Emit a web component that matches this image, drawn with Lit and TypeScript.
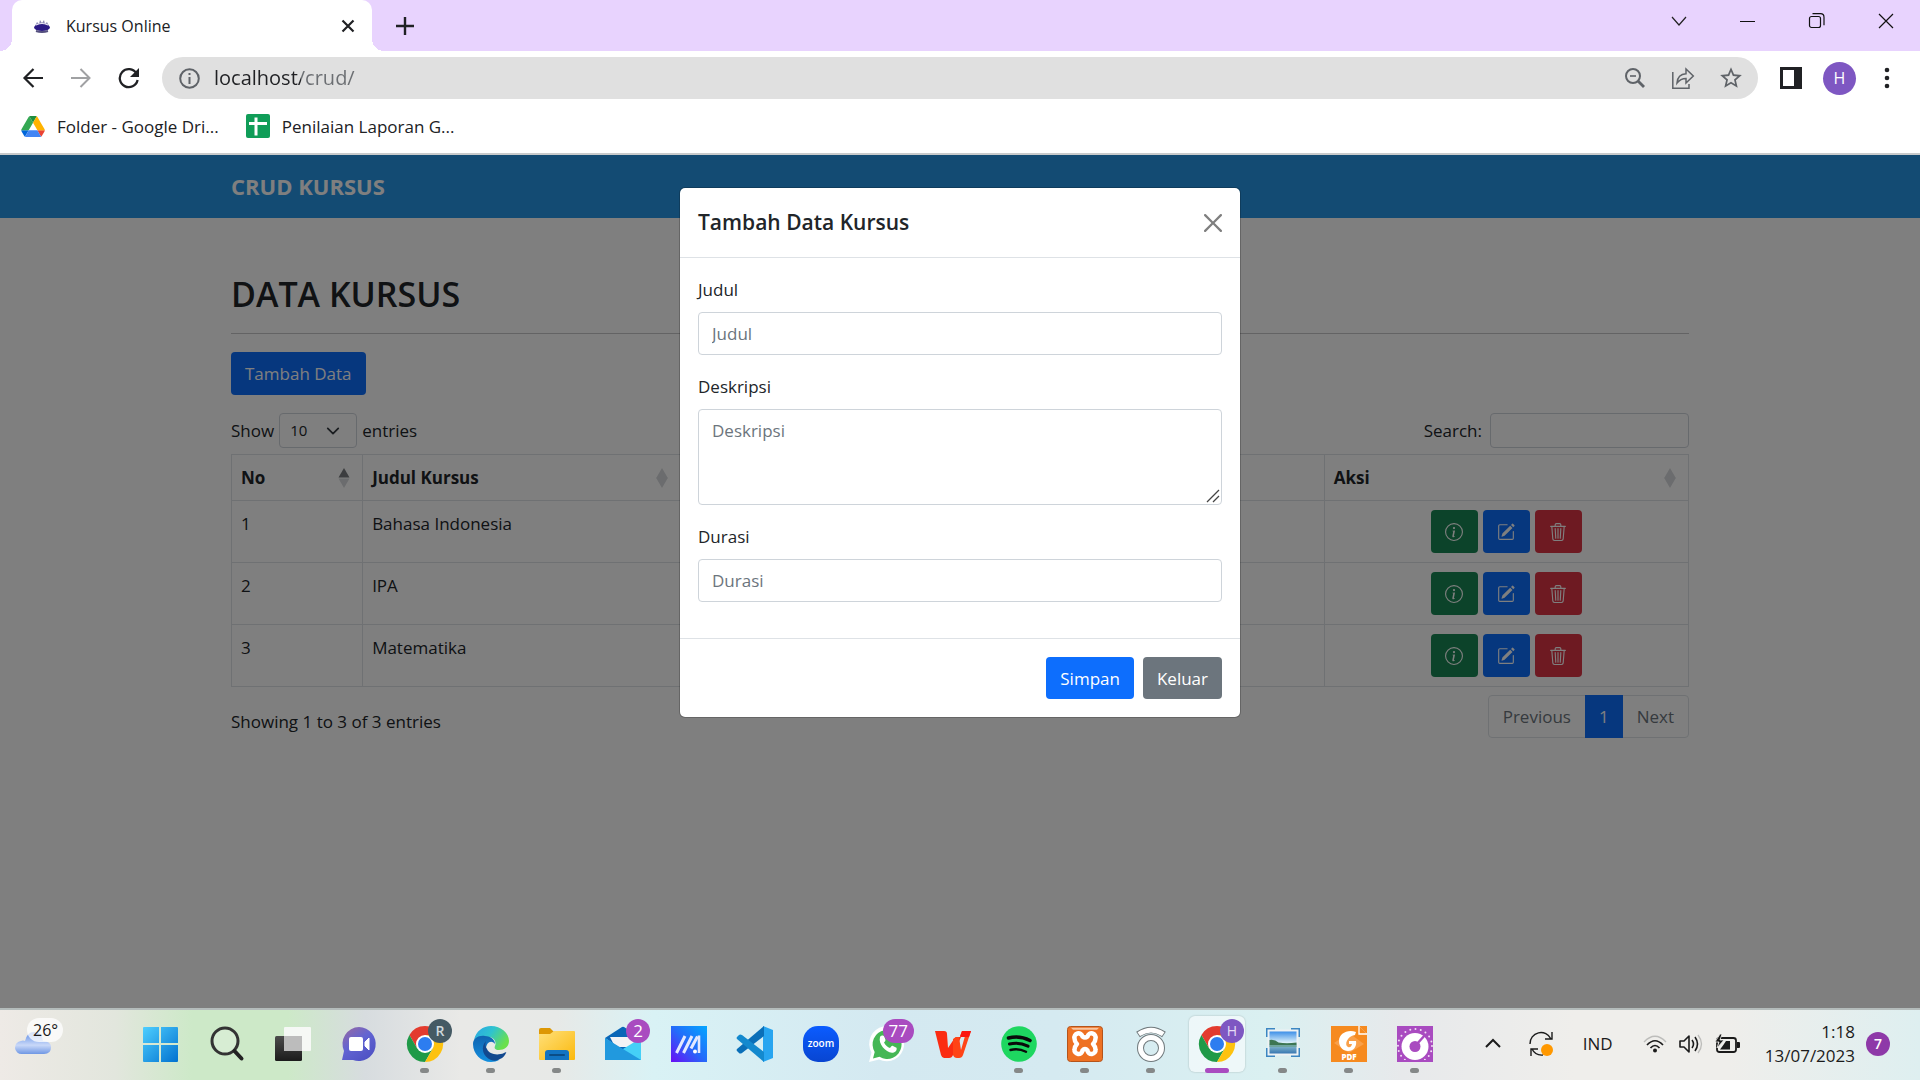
import { LitElement, html, css, svg } from "lit";
import { customElement, property } from "lit/decorators.js";

const icons = {
  info: svg`<path d="M8 15A7 7 0 1 1 8 1a7 7 0 0 1 0 14zm0 1A8 8 0 1 0 8 0a8 8 0 0 0 0 16z"/><path d="m8.93 6.588-2.29.287-.082.38.45.083c.294.07.352.176.288.469l-.738 3.468c-.194.897.105 1.319.808 1.319.545 0 1.178-.252 1.465-.598l.088-.416c-.2.176-.492.246-.686.246-.275 0-.375-.193-.304-.533L8.93 6.588zM9 4.5a1 1 0 1 1-2 0 1 1 0 0 1 2 0z"/>`,
  edit: svg`<path d="M15.502 1.94a.5.5 0 0 1 0 .706L14.459 3.69l-2-2L13.502.646a.5.5 0 0 1 .707 0l1.293 1.293zm-1.75 2.456-2-2L4.939 9.21a.5.5 0 0 0-.121.196l-.805 2.414a.25.25 0 0 0 .316.316l2.414-.805a.5.5 0 0 0 .196-.12l6.813-6.814z"/><path d="M1 13.5A1.5 1.5 0 0 0 2.5 15h11a1.5 1.5 0 0 0 1.5-1.5v-6a.5.5 0 0 0-1 0v6a.5.5 0 0 1-.5.5h-11a.5.5 0 0 1-.5-.5v-11a.5.5 0 0 1 .5-.5H9a.5.5 0 0 0 0-1H2.5A1.5 1.5 0 0 0 1 2.5v11z"/>`,
  trash: svg`<path d="M6.5 1h3a.5.5 0 0 1 .5.5v1H6v-1a.5.5 0 0 1 .5-.5ZM11 2.5v-1A1.5 1.5 0 0 0 9.5 0h-3A1.5 1.5 0 0 0 5 1.5v1H2.506a.58.58 0 0 0-.01 0H1.5a.5.5 0 0 0 0 1h.538l.853 10.66A2 2 0 0 0 4.885 16h6.23a2 2 0 0 0 1.994-1.84l.853-10.66h.538a.5.5 0 0 0 0-1h-.995a.59.59 0 0 0-.01 0H11Zm1.958 1-.846 10.58a1 1 0 0 1-.997.92h-6.23a1 1 0 0 1-.997-.92L3.042 3.5h9.916Zm-7.487 1a.5.5 0 0 1 .528.47l.5 8.5a.5.5 0 0 1-.998.06L5 5.03a.5.5 0 0 1 .47-.53Zm5.058 0a.5.5 0 0 1 .47.53l-.5 8.5a.5.5 0 1 1-.998-.06l.5-8.5a.5.5 0 0 1 .528-.47ZM8 4.5a.5.5 0 0 1 .5.5v8.5a.5.5 0 0 1-1 0V5a.5.5 0 0 1 .5-.5Z"/>`,
  close: svg`<path d="M.293.293a1 1 0 0 1 1.414 0L8 6.586 14.293.293a1 1 0 1 1 1.414 1.414L9.414 8l6.293 6.293a1 1 0 0 1-1.414 1.414L8 9.414l-6.293 6.293a1 1 0 0 1-1.414-1.414L6.586 8 .293 1.707a1 1 0 0 1 0-1.414z"/>`,
};

const bootIcon = (shape: unknown) =>
  html`<svg width="18" height="18" viewBox="0 0 16 16" fill="currentColor" aria-hidden="true">${shape}</svg>`;

const base = css`
  *,
  *::before,
  *::after {
    box-sizing: border-box;
  }
  button,
  input,
  select,
  textarea {
    font: inherit;
    color: inherit;
    margin: 0;
  }
  button {
    border: 0;
    padding: 0;
    background: none;
    cursor: pointer;
  }
  a {
    color: inherit;
    text-decoration: none;
  }
  svg {
    display: block;
    flex: none;
  }
`;

@customElement("browser-chrome")
class BrowserChrome extends LitElement {
  static styles = [
    base,
    css`
      :host {
        display: block;
        background: #fff;
        color: #202124;
        font-size: 17px;
        border-bottom: 2px solid #c8cacb;
      }
      .strip {
        display: flex;
        height: 51px;
        padding-left: 12px;
        background: #e8d3fe;
      }
      .tab {
        position: relative;
        display: flex;
        align-items: center;
        width: 360px;
        padding: 0 16px 0 21px;
        background: #fff;
        border-radius: 10px 10px 0 0;
      }
      .tab::before,
      .tab::after {
        content: "";
        position: absolute;
        bottom: 0;
        width: 12px;
        height: 12px;
      }
      .tab::before {
        left: -12px;
        background: radial-gradient(circle at 0 0, transparent 12px, #fff 12px);
      }
      .tab::after {
        right: -12px;
        background: radial-gradient(circle at 100% 0, transparent 12px, #fff 12px);
      }
      .tab-title {
        flex: 1;
        padding-left: 15px;
        font-size: 16px;
      }
      .new-tab {
        width: 66px;
      }
      .new-tab svg,
      .window-controls svg,
      .tool svg {
        margin: auto;
      }
      .window-controls {
        display: flex;
        height: 42px;
        margin-left: auto;
      }
      .window-controls button {
        width: 69px;
      }
      .toolbar {
        display: flex;
        align-items: center;
        height: 54px;
        padding: 0 9px;
      }
      .tool {
        width: 48px;
        height: 42px;
      }
      .reload {
        margin-right: 9px;
        width: 48px;
      }
      .omnibox {
        display: flex;
        align-items: center;
        flex: 1;
        height: 42px;
        padding: 0 3px 0 17px;
        margin-right: 9px;
        border-radius: 21px;
        background: #e0e0e0;
      }
      .address {
        flex: 1;
        min-width: 0;
        border: 0;
        outline: 0;
        margin-left: 14px;
        padding: 0;
        font-size: 20px;
        line-height: 28px;
        color: transparent;
        background: linear-gradient(to right, #202124 87px, #6b6e72 87px) text;
      }
      .avatar {
        display: grid;
        place-items: center;
        width: 33px;
        height: 33px;
        margin: 0 7px 0 8px;
        border-radius: 50%;
        background: #7e57c2;
        color: #fff;
        font-size: 16px;
      }
      .bookmarks {
        display: flex;
        align-items: center;
        gap: 27px;
        height: 48px;
        padding: 0 21px 6px;
      }
      .bookmark {
        display: flex;
        align-items: center;
        gap: 12px;
      }
    `,
  ];

  render() {
    return html`
      <div class="strip">
        <div class="tab">
          <svg width="18" height="14" viewBox="0 0 18 14">
            <path d="M2 7 4 3l2 2 1-4 2 3 2-3 1 4 2-2 2 4z" fill="#8d8ab5" />
            <ellipse cx="9" cy="8.500" rx="8" ry="3.500" fill="#2b1a85" />
            <path d="M3 6q6-3 12 0" stroke="#eceaf8" fill="none" stroke-width="1.200" />
            <path d="M3 12q6 2 12 0" stroke="#55507f" fill="none" stroke-width="2" />
          </svg>
          <span class="tab-title">Kursus Online</span>
          <button aria-label="Tutup tab">
            <svg width="16" height="16" viewBox="0 0 16 16"><path d="M2.500 2.500l11 11M13.500 2.500l-11 11" stroke="#202124" stroke-width="2.200" /></svg>
          </button>
        </div>
        <button class="new-tab" aria-label="Tab baru">
          <svg width="20" height="20" viewBox="0 0 20 20"><path d="M10 1v18M1 10h18" stroke="#202124" stroke-width="2.400" /></svg>
        </button>
        <div class="window-controls">
          <button aria-label="Telusuri tab"><svg width="18" height="18" viewBox="0 0 18 18"><path d="M2 5l7 8 7-8" fill="none" stroke="#222" stroke-width="1.200" /></svg></button>
          <button aria-label="Perkecil"><svg width="18" height="18" viewBox="0 0 18 18"><path d="M1 9.500h15" stroke="#111" /></svg></button>
          <button aria-label="Pulihkan">
            <svg width="18" height="18" viewBox="0 0 18 18" fill="none" stroke="#111" stroke-width="1.200"><rect x="1.500" y="4.500" width="11" height="11" rx="2" /><path d="M4.500 1.700h8q3.500 0 3.500 3.500v8" /></svg>
          </button>
          <button aria-label="Tutup"><svg width="18" height="18" viewBox="0 0 18 18"><path d="M2 2l14 14M16 2L2 16" stroke="#111" stroke-width="1.200" /></svg></button>
        </div>
      </div>
      <div class="toolbar">
        <button class="tool" aria-label="Kembali">
          <svg width="22" height="22" viewBox="0 0 22 22" fill="none" stroke="#202124" stroke-width="2.200"><path d="M21 11H3M11.500 2L2.500 11l9 9" /></svg>
        </button>
        <button class="tool" aria-label="Maju">
          <svg width="22" height="22" viewBox="0 0 22 22" fill="none" stroke="#a0a1a3" stroke-width="2"><path d="M1 11h18M10.500 2l9 9-9 9" /></svg>
        </button>
        <button class="tool reload" aria-label="Muat ulang">
          <svg width="22" height="22" viewBox="0 0 22 22"><path d="M18.500 6.500A9 9 0 1 0 19.600 13" fill="none" stroke="#202124" stroke-width="2.300" /><path d="M21 1v9h-9z" fill="#202124" /></svg>
        </button>
        <div class="omnibox">
          <svg width="21" height="21" viewBox="0 0 21 21" fill="none" stroke="#5f6368" stroke-width="2"><circle cx="10.500" cy="10.500" r="9.300" /><path d="M10.500 9v7M10.500 5v2" /></svg>
          <input class="address" type="text" aria-label="Alamat" value="localhost/crud/" />
          <button class="tool" aria-label="Zoom">
            <svg width="22" height="22" viewBox="0 0 22 22" fill="none" stroke="#5f6368" stroke-width="2"><circle cx="9" cy="9" r="7" /><path d="M14 14l6 6" stroke-width="2.800" /><path d="M6 9h6" stroke-width="1.600" /></svg>
          </button>
          <button class="tool" aria-label="Bagikan">
            <svg width="24" height="24" viewBox="0 0 24 24" fill="none" stroke="#5f6368" stroke-width="1.500"><path d="M1.800 6v16.200H18V18" /><path d="M6 17c.5-6 4-9 9-9.200V3l7.300 7-7.300 7v-4.600c-4 0-6.500 1.400-9 4.600z" /></svg>
          </button>
          <button class="tool" aria-label="Tandai halaman">
            <svg width="26" height="26" viewBox="0 0 24 24"><path d="M22 9.240l-7.190-.62L12 2 9.190 8.630 2 9.240l5.460 4.730L5.820 21 12 17.270 18.180 21l-1.630-7.030L22 9.240zM12 15.400l-3.760 2.270 1-4.280-3.320-2.880 4.380-.38L12 6.100l1.710 4.040 4.380.38-3.320 2.880 1 4.280L12 15.400z" fill="#5f6368" /></svg>
          </button>
        </div>
        <button class="tool" aria-label="Panel samping">
          <svg width="22" height="22" viewBox="0 0 22 22"><rect width="22" height="22" fill="#202124" /><rect x="3" y="3" width="11" height="16" fill="#fff" /></svg>
        </button>
        <button class="avatar" aria-label="Profil">H</button>
        <button class="tool" aria-label="Menu">
          <svg width="6" height="22" viewBox="0 0 6 22" fill="#202124"><circle cx="3" cy="3" r="2.300" /><circle cx="3" cy="11" r="2.300" /><circle cx="3" cy="19" r="2.300" /></svg>
        </button>
      </div>
      <nav class="bookmarks" aria-label="Bookmark">
        <a class="bookmark" href="#drive">
          <svg width="24" height="21" viewBox="0 0 87 78">
            <path d="m6.600 66.850 3.850 6.650c.8 1.400 1.950 2.500 3.300 3.300l13.750-23.800h-27.500c0 1.550.4 3.100 1.200 4.500z" fill="#0066da" />
            <path d="m43.650 25-13.750-23.800c-1.350.8-2.500 1.900-3.300 3.300l-25.400 44a9.060 9.060 0 0 0 -1.200 4.500h27.500z" fill="#34a853" />
            <path d="m73.550 76.800c1.350-.8 2.500-1.900 3.300-3.300l1.600-2.750 7.650-13.250c.8-1.400 1.200-2.950 1.200-4.500h-27.502l5.852 11.500z" fill="#ea4335" />
            <path d="m43.650 25 13.750-23.800c-1.350-.8-2.900-1.200-4.500-1.200h-18.500c-1.600 0-3.150.45-4.500 1.200z" fill="#1e8e3e" />
            <path d="m59.800 53h-32.300l-13.750 23.800c1.350.8 2.900 1.200 4.500 1.200h50.800c1.600 0 3.150-.45 4.500-1.200z" fill="#4285f4" />
            <path d="m73.400 26.500-12.700-22c-.8-1.400-1.950-2.500-3.300-3.300l-13.750 23.800 16.150 28h27.450c0-1.550-.4-3.100-1.200-4.500z" fill="#ffb300" />
          </svg>
          Folder - Google Dri...
        </a>
        <a class="bookmark" href="#penilaian">
          <svg width="24" height="24" viewBox="0 0 24 24"><rect width="24" height="24" rx="2" fill="#109d58" /><path d="M10 3.500v18M3 9.500h18" stroke="#fff" stroke-width="3" /></svg>
          Penilaian Laporan G...
        </a>
      </nav>
    `;
  }
}

@customElement("kursus-page")
class KursusPage extends LitElement {
  @property({ attribute: false }) rows = [
    { no: 1, judul: "Bahasa Indonesia" },
    { no: 2, judul: "IPA" },
    { no: 3, judul: "Matematika" },
  ];

  static styles = [
    base,
    css`
      :host {
        display: block;
        background: #fff;
        color: #212529;
        font-size: 17px;
        line-height: 27px;
      }
      .navbar {
        background: #2696e6;
        height: 63px;
      }
      .container {
        width: 76%;
        max-width: 1458px;
        margin: 0 auto;
      }
      .navbar .container {
        display: flex;
        align-items: center;
        height: 100%;
      }
      .brand {
        color: #fff;
        font-size: 22px;
        font-weight: 700;
      }
      h1 {
        margin: 54px 0 16px;
        font-size: 34px;
        font-weight: 600;
        line-height: 45px;
      }
      hr {
        margin: 0 0 18px;
        border: 0;
        border-top: 1px solid #c6c7c8;
      }
      .btn {
        display: inline-flex;
        align-items: center;
        justify-content: center;
        min-width: 47px;
        height: 43px;
        padding: 0 14px;
        border-radius: 4px;
        color: #fff;
      }
      .primary {
        background: #0d6efd;
      }
      .success {
        background: #198754;
      }
      .danger {
        background: #dc3545;
      }
      .controls,
      .summary {
        display: flex;
        justify-content: space-between;
        align-items: center;
      }
      .controls {
        margin: 18px 0 6px;
      }
      .length,
      .search {
        display: flex;
        align-items: center;
        gap: 5px;
      }
      .search {
        gap: 8px;
      }
      .length select,
      .search input {
        height: 35px;
        border: 1px solid #ced4da;
        border-radius: 4px;
        background: #fff;
        font-size: 15px;
      }
      .length select {
        appearance: none;
        width: 78px;
        padding: 0 10px;
        background: #fff
          url("data:image/svg+xml,%3csvg xmlns='http://www.w3.org/2000/svg' viewBox='0 0 16 16'%3e%3cpath fill='none' stroke='%23343a40' stroke-linecap='round' stroke-linejoin='round' stroke-width='2' d='M2 5l6 6 6-6'/%3e%3c/svg%3e")
          no-repeat right 16px center / 14px 14px;
      }
      .search input {
        width: 199px;
      }
      table {
        width: 100%;
        table-layout: fixed;
        border-collapse: collapse;
      }
      th,
      td {
        padding: 9px;
        border: 1px solid #dee2e6;
        text-align: left;
        vertical-align: top;
      }
      .col-no {
        width: 9%;
      }
      .col-title {
        width: 21.8%;
      }
      .col-action {
        width: 25%;
      }
      .heading {
        display: flex;
        width: 100%;
        align-items: center;
        justify-content: space-between;
        font-weight: 700;
        padding-right: 3px;
      }
      .actions {
        display: flex;
        justify-content: center;
        gap: 5px;
      }
      .summary {
        margin-top: 8px;
      }
      .summary p {
        margin: 9px 0 0;
      }
      .pagination {
        display: flex;
        height: 43px;
        border: 1px solid #dee2e6;
        border-radius: 4px;
      }
      .pagination button {
        padding: 0 14px;
        color: #6c757d;
      }
      .pagination .current {
        margin: -1px 0;
        background: #0d6efd;
        color: #fff;
      }
    `,
  ];

  private heading(label: string, sorted = false) {
    return html`<button class="heading">
      ${label}
      <svg width="12" height="20" viewBox="0 0 12 20">
        <path d="M6 0l5.500 9.500H.5z" fill=${sorted ? "#787b7e" : "#d6d9dc"} />
        <path d="M6 20L.5 10.500h11z" fill="#d6d9dc" />
        ${sorted ? "" : svg`<path d="M.5 9h11v2H.5z" fill="#d6d9dc" />`}
      </svg>
    </button>`;
  }

  render() {
    return html`
      <header class="navbar">
        <div class="container"><a class="brand" href="#home">CRUD KURSUS</a></div>
      </header>
      <main class="container">
        <h1>DATA KURSUS</h1>
        <hr />
        <button class="btn primary">Tambah Data</button>
        <div class="controls">
          <label class="length">Show <select><option>10</option><option>25</option></select> entries</label>
          <label class="search">Search: <input type="search" /></label>
        </div>
        <table>
          <colgroup>
            <col class="col-no" />
            <col class="col-title" />
            <col />
            <col />
            <col class="col-action" />
          </colgroup>
          <thead>
            <tr>
              <th>${this.heading("No", true)}</th>
              <th>${this.heading("Judul Kursus")}</th>
              <th></th>
              <th>${this.heading("")}</th>
              <th>${this.heading("Aksi")}</th>
            </tr>
          </thead>
          <tbody>
            ${this.rows.map(
              (row) => html`<tr>
                <td>${row.no}</td>
                <td>${row.judul}</td>
                <td></td>
                <td></td>
                <td>
                  <div class="actions">
                    <button class="btn success" aria-label="Info">${bootIcon(icons.info)}</button>
                    <button class="btn primary" aria-label="Edit">${bootIcon(icons.edit)}</button>
                    <button class="btn danger" aria-label="Hapus">${bootIcon(icons.trash)}</button>
                  </div>
                </td>
              </tr>`
            )}
          </tbody>
        </table>
        <div class="summary">
          <p>Showing 1 to 3 of 3 entries</p>
          <div class="pagination">
            <button disabled>Previous</button>
            <button class="current">1</button>
            <button disabled>Next</button>
          </div>
        </div>
      </main>
    `;
  }
}

@customElement("kursus-modal")
class KursusModal extends LitElement {
  static styles = [
    base,
    css`
      :host {
        display: block;
        color: #212529;
        font-size: 17px;
        line-height: 27px;
      }
      .dialog {
        width: 562px;
        max-width: 100%;
        margin: 32px auto;
        background: #fff;
        background-clip: padding-box;
        border: 1px solid rgba(0, 0, 0, 0.2);
        border-radius: 6px;
      }
      header {
        display: flex;
        align-items: center;
        justify-content: space-between;
        padding: 18px;
        height: 70px;
        border-bottom: 1px solid #dee2e6;
      }
      h2 {
        margin: 0;
        font-size: 21px;
        line-height: 33px;
        font-weight: 600;
      }
      .close {
        color: #7f7f7f;
      }
      .body {
        padding: 18px 18px 0;
      }
      .field {
        display: flex;
        flex-direction: column;
        gap: 9px;
        padding-bottom: 18px;
      }
      input,
      textarea {
        display: block;
        width: 100%;
        height: 43px;
        padding: 6px 13px;
        border: 1px solid #ced4da;
        border-radius: 4px;
        background: #fff;
      }
      textarea {
        height: 96px;
        padding-top: 7px;
      }
      textarea::-webkit-resizer {
        background: url("data:image/svg+xml,%3csvg xmlns='http://www.w3.org/2000/svg' viewBox='0 0 15 15'%3e%3cpath fill='none' stroke='%23444' stroke-width='1.300' d='M1 13L13 1M7 13l6-6'/%3e%3c/svg%3e")
          no-repeat center / 15px 15px;
      }
      ::placeholder {
        color: #6c757d;
        opacity: 1;
      }
      footer {
        display: flex;
        justify-content: flex-end;
        gap: 9px;
        margin-top: 18px;
        padding: 18px;
        border-top: 1px solid #dee2e6;
      }
      footer button {
        height: 42px;
        padding: 0 14px;
        border-radius: 4px;
        color: #fff;
      }
      .save {
        background: #0d6efd;
      }
      .cancel {
        background: #6c757d;
      }
    `,
  ];

  render() {
    return html`
      <form class="dialog" role="dialog" aria-labelledby="title">
        <header>
          <h2 id="title">Tambah Data Kursus</h2>
          <button class="close" type="button" aria-label="Tutup">${bootIcon(icons.close)}</button>
        </header>
        <div class="body">
          <div class="field"><label for="judul">Judul</label><input id="judul" type="text" placeholder="Judul" /></div>
          <div class="field"><label for="deskripsi">Deskripsi</label><textarea id="deskripsi" placeholder="Deskripsi"></textarea></div>
          <div class="field"><label for="durasi">Durasi</label><input id="durasi" type="text" placeholder="Durasi" /></div>
        </div>
        <footer>
          <button class="save" type="button">Simpan</button>
          <button class="cancel" type="button">Keluar</button>
        </footer>
      </form>
    `;
  }
}

const chromeLogo = svg`
  <path d="M18 0a18 18 0 0 0-15.600 9l7.800 13.500L18 9h15.600A18 18 0 0 0 18 0z" fill="#e33b2e" />
  <path d="M2.400 9A18 18 0 0 0 18 36l7.800-13.500H10.200z" fill="#1f9a48" />
  <path d="M33.600 9H18l7.800 13.500L18 36A18 18 0 0 0 33.600 9z" fill="#fdc20f" />
  <circle cx="18" cy="18" r="9" fill="#fff" /><circle cx="18" cy="18" r="7" fill="#2d7df0" />`;

interface App {
  name: string;
  art: unknown;
  badge?: string;
  badgeKind?: string;
  open?: boolean;
  active?: boolean;
}

const apps: App[] = [
  {
    name: "Mulai",
    art: svg`<defs><linearGradient id="g-win" gradientUnits="userSpaceOnUse" x1="0" y1="0" x2="36" y2="36"><stop offset="0" stop-color="#4fd0ff"/><stop offset="1" stop-color="#0070cf"/></linearGradient></defs>
      <g fill="url(#g-win)"><path d="M1 1h15v16H0V2q0-1 1-1zM18 1h16q1 0 1 1v15H18zM0 19h16v17H1q-1 0-1-1zM18 19h17v16q0 1-1 1H18z"/></g>`,
  },
  {
    name: "Cari",
    art: svg`<circle cx="16" cy="15" r="13" fill="#fff" fill-opacity=".2" stroke="#333" stroke-width="3"/><path d="M25.500 25L32.500 32.500" stroke="#222" stroke-width="4" stroke-linecap="round"/>`,
  },
  {
    name: "Tampilan tugas",
    art: svg`<defs><linearGradient id="g-task" x1="0" y1="0" x2="0" y2="1"><stop offset="0" stop-color="#4c4c4c"/><stop offset="1" stop-color="#1b1b1b"/></linearGradient></defs>
      <rect y="10" width="27" height="25" rx="1.500" fill="url(#g-task)"/><rect x="9" y="1" width="27" height="24" rx="1" fill="#fafafa" fill-opacity=".9"/><path d="M9 10h18v15H9z" fill="#bcbcbc"/>`,
  },
  {
    name: "Chat",
    art: svg`<defs><linearGradient id="g-chat" x1="0" y1="0" x2=".7" y2="1"><stop offset="0" stop-color="#9b6a9f"/><stop offset=".5" stop-color="#6264d2"/><stop offset="1" stop-color="#4f52c4"/></linearGradient></defs>
      <path d="M18 1a17 17 0 1 1-6 33H1l2-9A17 17 0 0 1 18 1z" fill="url(#g-chat)"/><rect x="8" y="11" width="14" height="14" rx="2" fill="#fff"/><path d="M24 16l4-4v12l-4-4z" fill="#fff" stroke="#fff" stroke-linejoin="round"/>`,
  },
  { name: "Chrome R", art: chromeLogo, badge: "R", badgeKind: "slate", open: true },
  {
    name: "Edge",
    art: svg`<defs><linearGradient id="g-e1" x1="0" y1="0" x2="1" y2=".5"><stop offset="0" stop-color="#2aa5e6"/><stop offset=".5" stop-color="#2fc3cf"/><stop offset="1" stop-color="#6be04c"/></linearGradient><linearGradient id="g-e2" x1="0" y1="0" x2="0" y2="1"><stop offset="0" stop-color="#1063b0"/><stop offset="1" stop-color="#1490df"/></linearGradient></defs>
      <path d="M1 14C3 5 10 0 18 0c10 0 18 7 18 15 0 6-5 9-10 9-4 0-5-2-4-4 2-4-1-9-7-9-6-1-11 0-14 3z" fill="url(#g-e1)"/>
      <path d="M0 18c0-6 6-9 12-8 6 0 10 4 10 8-4-5-9-1-9 5 0 6 6 11 13 11-2 1-5 2-8 2C8 36 0 28 0 18z" fill="url(#g-e2)"/>
      <path d="M13 15c-6 6-3 16 5 19 3 1 6 1 9-1 3-1 5-4 6-6 1-1-1-1-2 0-7 3-15 1-17-4-2-3-2-5-1-8z" fill="#12498f"/>`,
    open: true,
  },
  {
    name: "File Explorer",
    art: svg`<defs><linearGradient id="g-f" x1="0" y1="0" x2="1" y2="1"><stop offset="0" stop-color="#ffe07a"/><stop offset="1" stop-color="#fbb90d"/></linearGradient></defs>
      <path d="M0 4q0-2 2-2h9l4 4-3 4H0z" fill="#dd9704"/><path d="M0 8h11l4-3h20q1 0 1 1v27q0 1-1 1H1q-1 0-1-1z" fill="url(#g-f)"/><path d="M6 34v-7q0-3 3-3h18q3 0 3 3v7z" fill="#1274c2"/><path d="M11 29h14" stroke="#0b4d86" stroke-width="2" stroke-linecap="round"/>`,
    open: true,
  },
  {
    name: "Mail",
    art: svg`<path d="M0 12L17 1q1-.6 2 0l17 11-18 12z" fill="#0a66b7"/><path d="M5 11h27v10H10z" fill="#f3f3f5"/><path d="M0 12l21 14-18 8H0z" fill="#1f9ee0"/><path d="M36 12L0 34h36z" fill="#45d0f7"/><path d="M0 12l36 22H0z" fill="#2199de"/>`,
    badge: "2",
    badgeKind: "plum",
  },
  {
    name: "MyASUS",
    art: svg`<defs><linearGradient id="g-m" x1="0" y1="1" x2="1" y2="0"><stop offset="0" stop-color="#6a0df5"/><stop offset=".5" stop-color="#246bfa"/><stop offset="1" stop-color="#04a7ff"/></linearGradient></defs>
      <rect width="36" height="36" fill="url(#g-m)"/><g fill="none" stroke="#e3e8ff" stroke-width="3"><path d="M5.500 27L14 10M12.500 27L21 10M20 22.500L26.500 10.500"/><path d="M28 9.500V27" stroke-width="2.600"/></g><circle cx="24" cy="25.500" r="2" fill="#fff"/>`,
  },
  {
    name: "VS Code",
    art: svg`<path d="M26 0l10 4v28l-10 4z" fill="#28a5f0"/><path d="M27 0v10L5 27q-2 1-3 0l-2-2q-1-1 0-2z" fill="#0a6fb8"/><path d="M27 36V26L5 9Q3 8 2 9l-2 2q-1 1 0 2z" fill="#1389ce"/>`,
  },
  {
    name: "Zoom",
    art: svg`<defs><linearGradient id="g-z" x1="0" y1="0" x2="0" y2="1"><stop offset="0" stop-color="#0b5cff"/><stop offset="1" stop-color="#0845d1"/></linearGradient></defs>
      <rect width="36" height="36" rx="15" fill="url(#g-z)"/><text x="18" y="21" fill="#fff" font-size="10" font-weight="600" text-anchor="middle">zoom</text>`,
  },
  {
    name: "WhatsApp",
    art: svg`<path d="M0 36l2.500-9.500A17.500 17.500 0 1 1 10 33.500z" fill="#fff"/><path d="M4 32.500l1.700-6.500A14.500 14.500 0 1 1 10.500 30.800z" fill="#45b755"/><path d="M11 11c1-2 4-2 4.500 0l1 3q0 1-1.500 2.500c1.500 3 3.500 4.500 6 5.500 1.500-2 2-2.500 3-2l3.500 1.800c1 3-2 5-4.500 5C16.500 26 9 18 11 11z" fill="#fff"/>`,
    badge: "77",
    badgeKind: "plum",
  },
  {
    name: "WPS Office",
    art: svg`<path d="M0 5h9q3 0 3 3l1 14 6-9q1-2 3-2h4l-8 18q-1 3-4 3H9Q7 32 6 29z" fill="#fb2c12"/><path d="M18 13l3-2h3l2 13 4-14h-5l2-5h9l-8 24q-1 3-4 3h-2q-3 0-4-3z" fill="#ff4417"/><path d="M27 5h9l-2 6h-9z" fill="#fb1510"/>`,
  },
  {
    name: "Spotify",
    art: svg`<circle cx="18" cy="18" r="17.800" fill="#1ed760"/><g fill="none" stroke="#0a0a0a" stroke-linecap="round"><path d="M7.500 12q11-3 21.500 2.500" stroke-width="3.600"/><path d="M8.500 18q9.500-2.500 18.500 2.200" stroke-width="3"/><path d="M9.500 24q8-2 15.500 1.800" stroke-width="2.400"/></g>`,
    open: true,
  },
  {
    name: "XAMPP",
    art: svg`<rect x=".5" y=".5" width="35" height="35" rx="3" fill="#ee7123" stroke="#b5541b"/><path d="M4 1.800h28l-2 2H6z" fill="#f9c6a1"/><path d="M7.500 12.500a4 4 0 0 1 8-2q2.500 2 5 0a4 4 0 0 1 8 2q0 3-2.500 5.500 2.500 2.500 2.500 5.500a4 4 0 0 1-8 1q-2.500-3-5 0a4 4 0 0 1-8-1q0-3 2.500-5.500-2.500-2.500-2.500-5.500z" fill="none" stroke="#fff" stroke-width="4.500" stroke-linejoin="round"/>`,
    open: true,
  },
  {
    name: "Connect",
    art: svg`<g fill="none"><path d="M5 8.500q13-9 26 0" stroke="#70797c" stroke-width="6.500"/><path d="M5.800 8.200q12.200-8.200 24.400 0" stroke="#fff" stroke-width="4.500"/><circle cx="18" cy="22" r="10.500" stroke="#70797c" stroke-width="7"/><circle cx="18" cy="22" r="10.500" stroke="#fff" stroke-width="5"/></g>`,
    open: true,
  },
  { name: "Chrome H", art: chromeLogo, badge: "H", badgeKind: "violet", open: true, active: true },
  {
    name: "Foto",
    art: svg`<defs><linearGradient id="g-p" x1="0" y1="0" x2="0" y2="1"><stop offset="0" stop-color="#2f86e6"/><stop offset=".5" stop-color="#d8eef8"/><stop offset=".6" stop-color="#8dbfd0"/><stop offset="1" stop-color="#2f6fae"/></linearGradient></defs>
      <path d="M1 2h9v9H1zM26 2h9v9h-9zM1 22h9v9H1zM26 22h9v9h-9z" fill="#3c86c2"/><rect x="3.500" y="4.500" width="29" height="24" fill="url(#g-p)" stroke="#eef2f4" stroke-width="2"/><path d="M4.500 14q5-1 9 2.500 8 1.500 18 0V19h-27z" fill="#3d7653"/><path d="M4.500 19h27v2h-27z" fill="#6fa6a0"/>`,
    open: true,
  },
  {
    name: "Foxit PDF",
    art: svg`<path d="M0 0h28l8 8v28H0z" fill="#f68a1f"/><path d="M18 7l15 11-15 9L3 17z" fill="#f9a04a"/><path d="M28 0h8v8z" fill="#f68a1f"/><path d="M28 0v8h8" fill="none" stroke="#fff" stroke-width="1.300"/><path d="M25 6c-9-3-17 2-17 9 0 6 4 10 9 10 6 0 9-5 8-10h-7v3h3q-1 4-4 3c-4-2-1-11 7-12z" fill="#fff"/><text x="18" y="34" fill="#fff" font-size="8" font-weight="800" text-anchor="middle">PDF</text>`,
    open: true,
  },
  {
    name: "Audio",
    art: svg`<rect width="36" height="36" fill="#a94bc0"/><circle cx="18" cy="20.500" r="13.500" fill="#fff"/><circle cx="18" cy="20.500" r="5.500" fill="#a94bc0"/><path d="M20 18L28 9" stroke="#a94bc0" stroke-width="2.500"/><g fill="none" stroke="#f1ddf5" stroke-width="2" stroke-linecap="round"><circle cx="18" cy="20" r="17" stroke-dasharray="0 5.340"/></g><path d="M0 34h36v2H0z" fill="#a94bc0"/>`,
    open: true,
  },
];

@customElement("task-bar")
class TaskBar extends LitElement {
  static styles = [
    base,
    css`
      :host {
        display: flex;
        align-items: stretch;
        height: 72px;
        padding-bottom: 2px;
        border-top: 2px solid #b4bcbb;
        color: #1b1b1b;
        font-size: 16px;
        line-height: 24px;
        background: linear-gradient(
          to right,
          #eeeae6 0%,
          #e2e6dd 6%,
          #cde9c8 10%,
          #cde9c8 15%,
          #d7dcdf 19%,
          #e9e9e7 24%,
          #e7e9e7 29%,
          #d9f2f5 34%,
          #d4e9f1 46%,
          #d5eaf1 55%,
          #daf0f1 66%,
          #e7e9eb 73%,
          #efeeeb 82%,
          #efeeeb 90%,
          #deeff0 100%
        );
      }
      .weather {
        position: relative;
        width: 128px;
      }
      .weather svg {
        margin: 20px 0 0 14px;
      }
      .weather span {
        position: absolute;
        left: 27px;
        top: 8px;
        padding: 0 5px 0 6px;
        border-radius: 12px;
        background: rgba(255, 255, 255, 0.75);
      }
      .apps {
        display: flex;
      }
      .app {
        position: relative;
        display: grid;
        place-items: center;
        width: 66px;
      }
      .app.active::before {
        content: "";
        position: absolute;
        inset: 6px 5px 6px;
        border-radius: 6px;
        background: rgba(255, 255, 255, 0.55);
        box-shadow: 0 0 2px rgba(0, 0, 0, 0.25);
      }
      .app svg {
        position: relative;
        overflow: visible;
        font-family: "Open Sans", sans-serif;
      }
      .app.open::after {
        content: "";
        position: absolute;
        left: 28px;
        bottom: 5px;
        width: 9px;
        height: 5px;
        border-radius: 3px;
        background: #858888;
      }
      .app.active::after {
        left: 21px;
        width: 24px;
        background: #a94bc0;
      }
      .badge {
        position: absolute;
        right: 6px;
        top: 9px;
        min-width: 24px;
        padding: 0 6px;
        border-radius: 12px;
        color: #fff;
        font-size: 17px;
        line-height: 24px;
        text-align: center;
      }
      .plum {
        background: #a94bc0;
      }
      .slate {
        background: #455a64;
        color: #cfd8dc;
        font-weight: 600;
        font-size: 14px;
      }
      .violet {
        background: #7e57c2;
        color: #e6dcf5;
        font-size: 14px;
      }
      .tray {
        display: flex;
        align-items: center;
        margin-left: auto;
        padding-right: 30px;
      }
      .tray button {
        display: grid;
        place-items: center;
        height: 48px;
        padding: 0 6px;
      }
      .tray .chevron,
      .tray .sync {
        width: 48px;
      }
      .tray .lang {
        width: 66px;
        margin-right: 6px;
      }
      .tray .clock {
        justify-items: end;
        padding: 0 11px 0 18px;
      }
      .lang,
      .clock {
        font-size: 17px;
      }
      .notice {
        width: 24px;
        border-radius: 12px;
        background: #8e39a8;
        color: #fff;
        font-size: 14px;
        font-weight: 600;
        text-align: center;
      }
    `,
  ];

  render() {
    return html`
      <div class="weather">
        <svg width="38" height="26" viewBox="0 0 38 26">
          <defs><linearGradient id="cloud" x1="0" y1="0" x2="0" y2="1"><stop offset="0" stop-color="#5c8ce6" /><stop offset=".6" stop-color="#c9d8f8" /><stop offset="1" stop-color="#6f97e4" /></linearGradient></defs>
          <path d="M8 24a6.500 6.500 0 0 1-1-13q2-1 4 0Q13 2 20 2q8 0 9 9 8 0 8 6.500T30 24z" fill="url(#cloud)" />
        </svg>
        <span>26°</span>
      </div>
      <div class="apps">
        ${apps.map(
          (app) => html`<button class="app ${app.open ? "open" : ""} ${app.active ? "active" : ""}" aria-label=${app.name}>
            <svg width="36" height="36" viewBox="0 0 36 36">${app.art}</svg>
            ${app.badge ? html`<span class="badge ${app.badgeKind}">${app.badge}</span>` : ""}
          </button>`
        )}
      </div>
      <div class="tray">
        <button class="chevron" aria-label="Ikon tersembunyi"><svg width="18" height="18" viewBox="0 0 18 18"><path d="M2 12l7-7 7 7" fill="none" stroke="#1b1b1b" stroke-width="2" /></svg></button>
        <button class="sync" aria-label="Pembaruan">
          <svg width="26" height="26" viewBox="0 0 26 26" fill="none" stroke="#1b1b1b" stroke-width="1.400"><path d="M2 13A11 11 0 0 1 23 8M24 1v7h-7M15 24A11 11 0 0 1 4 18M3 25v-7h7" /><circle cx="19" cy="19" r="6" fill="#ff9800" stroke="none" /></svg>
        </button>
        <button class="lang">IND</button>
        <button aria-label="Wi-Fi">
          <svg width="24" height="20" viewBox="0 0 24 20" fill="none" stroke="#1b1b1b" stroke-width="1.700"><path d="M1 8Q12-3.500 23 8" stroke="#bdbdbb" stroke-width="1.400" /><path d="M4 11q8-8.500 16 0M7.500 14q4.500-5 9 0" /><circle cx="12" cy="16.500" r="2" fill="#1b1b1b" stroke="none" /></svg>
        </button>
        <button aria-label="Volume">
          <svg width="24" height="22" viewBox="0 0 24 22" fill="none" stroke="#1b1b1b" stroke-width="1.600" stroke-linejoin="round"><path d="M1 8h4l5-5v16l-5-5H1zM13 7q3 4 0 8M16 4q5 7 0 14" /><path d="M19 2q7 9 0 18" stroke="#bdbdbb" stroke-width="1.300" /></svg>
        </button>
        <button aria-label="Baterai">
          <svg width="26" height="20" viewBox="0 0 26 20"><rect x="2" y="4" width="19" height="14" rx="2.500" fill="none" stroke="#1b1b1b" stroke-width="1.800" /><path d="M22 8h2q1 0 1 1v4q0 1-1 1h-2zM5 15.500l3-4 3-4.500h4v8.500z" fill="#1b1b1b" /><path d="M5 0L0 8h4l-2 6 7-8H5l2-6z" fill="#1b1b1b" stroke="#efeeeb" stroke-width=".8" /></svg>
        </button>
        <button class="clock"><span>1:18</span><span>13/07/2023</span></button>
        <span class="notice">7</span>
      </div>
    `;
  }
}

@customElement("app-root")
class AppRoot extends LitElement {
  static styles = [
    base,
    css`
      :host {
        display: flex;
        flex-direction: column;
        min-height: 100vh;
        font-family: "Segoe UI", "Open Sans", "Noto Sans", sans-serif;
      }
      .viewport {
        position: relative;
        flex: 1;
        background: #fff;
      }
      .backdrop {
        position: absolute;
        inset: 0;
        background: rgba(0, 0, 0, 0.5);
      }
    `,
  ];

  render() {
    return html`
      <browser-chrome></browser-chrome>
      <div class="viewport">
        <kursus-page></kursus-page>
        <div class="backdrop"><kursus-modal></kursus-modal></div>
      </div>
      <task-bar></task-bar>
    `;
  }
}
